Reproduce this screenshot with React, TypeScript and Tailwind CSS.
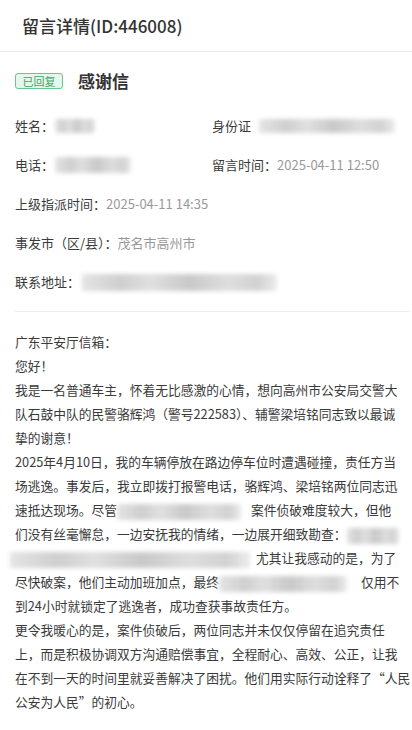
import React from "react";

const font = { fontFamily: '"Noto Sans CJK SC", "Noto Sans", sans-serif' };

// 打码块
const Blur: React.FC<{ className?: string }> = ({ className = "" }) => (
	<span
		className={`inline-block align-middle rounded-[2px] blur-[2px] bg-[linear-gradient(90deg,#e4e4e4_0%,#cfcfcf_20%,#e0e0e0_35%,#c9c9c9_55%,#dedede_75%,#d2d2d2_90%,#ececec_100%)] ${className}`}
	/>
);

type Seg = string | { blur: string };

const lines: Seg[][] = [
	["广东平安厅信箱："],
	["您好！"],
	["我是一名普通车主，怀着无比感激的心情，想向高州市公安局交警大"],
	["队石鼓中队的民警骆辉鸿（警号222583）、辅警梁培铭同志致以最诚"],
	["挚的谢意！"],
	["2025年4月10日，我的车辆停放在路边停车位时遭遇碰撞，责任方当"],
	["场逃逸。事发后，我立即拨打报警电话，骆辉鸿、梁培铭两位同志迅"],
	["速抵达现场。尽管", { blur: "w-[124px] h-[16px] mr-[10px]" }, "案件侦破难度较大，但他"],
	["们没有丝毫懈怠，一边安抚我的情绪，一边展开细致勘查：", { blur: "w-[52px] h-[16px]" }],
	[{ blur: "w-[240px] h-[16px] ml-[-5px] mr-[6px]" }, "尤其让我感动的是，为了"],
	["尽快破案，他们主动加班加点，最终", { blur: "w-[128px] h-[16px] mr-[14px]" }, "仅用不"],
	["到24小时就锁定了逃逸者，成功查获事故责任方。"],
	["更令我暖心的是，案件侦破后，两位同志并未仅仅停留在追究责任"],
	["上，而是积极协调双方沟通赔偿事宜，全程耐心、高效、公正，让我"],
	["在不到一天的时间里就妥善解决了困扰。他们用实际行动诠释了“人民"],
	["公安为人民”的初心。"],
];

const Field: React.FC<{ label: string; children?: React.ReactNode }> = ({ label, children }) => (
	<div className="flex items-center h-[24px] whitespace-nowrap">
		<span className="text-[#3a3a3a]">{label}</span>
		{children}
	</div>
);

export default function App() {
	return (
		<div className="w-[412px] h-[730px] overflow-hidden bg-white flex flex-col" style={font}>
			<div className="h-[52px] shrink-0 flex items-center pl-[22px] border-b border-[#ececec]">
				<h1 className="text-[17px] font-medium text-[#333]">留言详情(ID:446008)</h1>
			</div>

			<div className="flex flex-1 min-h-0">
				<div className="flex-1 pl-[15px] pr-[9px] text-[13px]">
					<div className="mt-[17px] h-[24px] flex items-center gap-[15px]">
						<span className="w-[48px] h-[16px] flex items-center justify-center rounded-[3px] border border-[#6cc48f] bg-[#e7f6ec] text-[11px] leading-none text-[#3aa865]">
							已回复
						</span>
						<span className="text-[17px] font-semibold text-[#333]">感谢信</span>
					</div>

					<div className="mt-[21px] flex flex-col gap-[15px]">
						<div className="grid grid-cols-[197px_1fr]">
							<Field label="姓名：">
								<Blur className="w-[40px] h-[14px] ml-[1px]" />
							</Field>
							<Field label="身份证">
								<Blur className="w-[136px] h-[14px] ml-[8px]" />
							</Field>
						</div>
						<div className="grid grid-cols-[197px_1fr]">
							<Field label="电话：">
								<Blur className="w-[76px] h-[16px] ml-[1px]" />
							</Field>
							<Field label="留言时间：">
								<span className="text-[#999]">2025-04-11 12:50</span>
							</Field>
						</div>
						<Field label="上级指派时间：">
							<span className="text-[#999]">2025-04-11 14:35</span>
						</Field>
						<Field label="事发市（区/县）：">
							<span className="text-[#999]">茂名市高州市</span>
						</Field>
						<Field label="联系地址：">
							<Blur className="w-[195px] h-[17px] ml-[2px]" />
						</Field>
					</div>

					<div className="mt-[17px] border-t border-[#eeeeee]" />

					<div className="mt-[18px] text-[12.75px] leading-[24px] text-[#3a3a3a]">
						{lines.map((line, i) => (
							<div key={i} className="whitespace-nowrap h-[24px]">
								{line.map((seg, j) =>
									typeof seg === "string" ? <span key={j}>{seg}</span> : <Blur key={j} className={seg.blur} />
								)}
							</div>
						))}
					</div>
				</div>
				<div className="w-[5px] shrink-0 mt-[3px] bg-[#e3e3e3]" />
			</div>
		</div>
	);
}
